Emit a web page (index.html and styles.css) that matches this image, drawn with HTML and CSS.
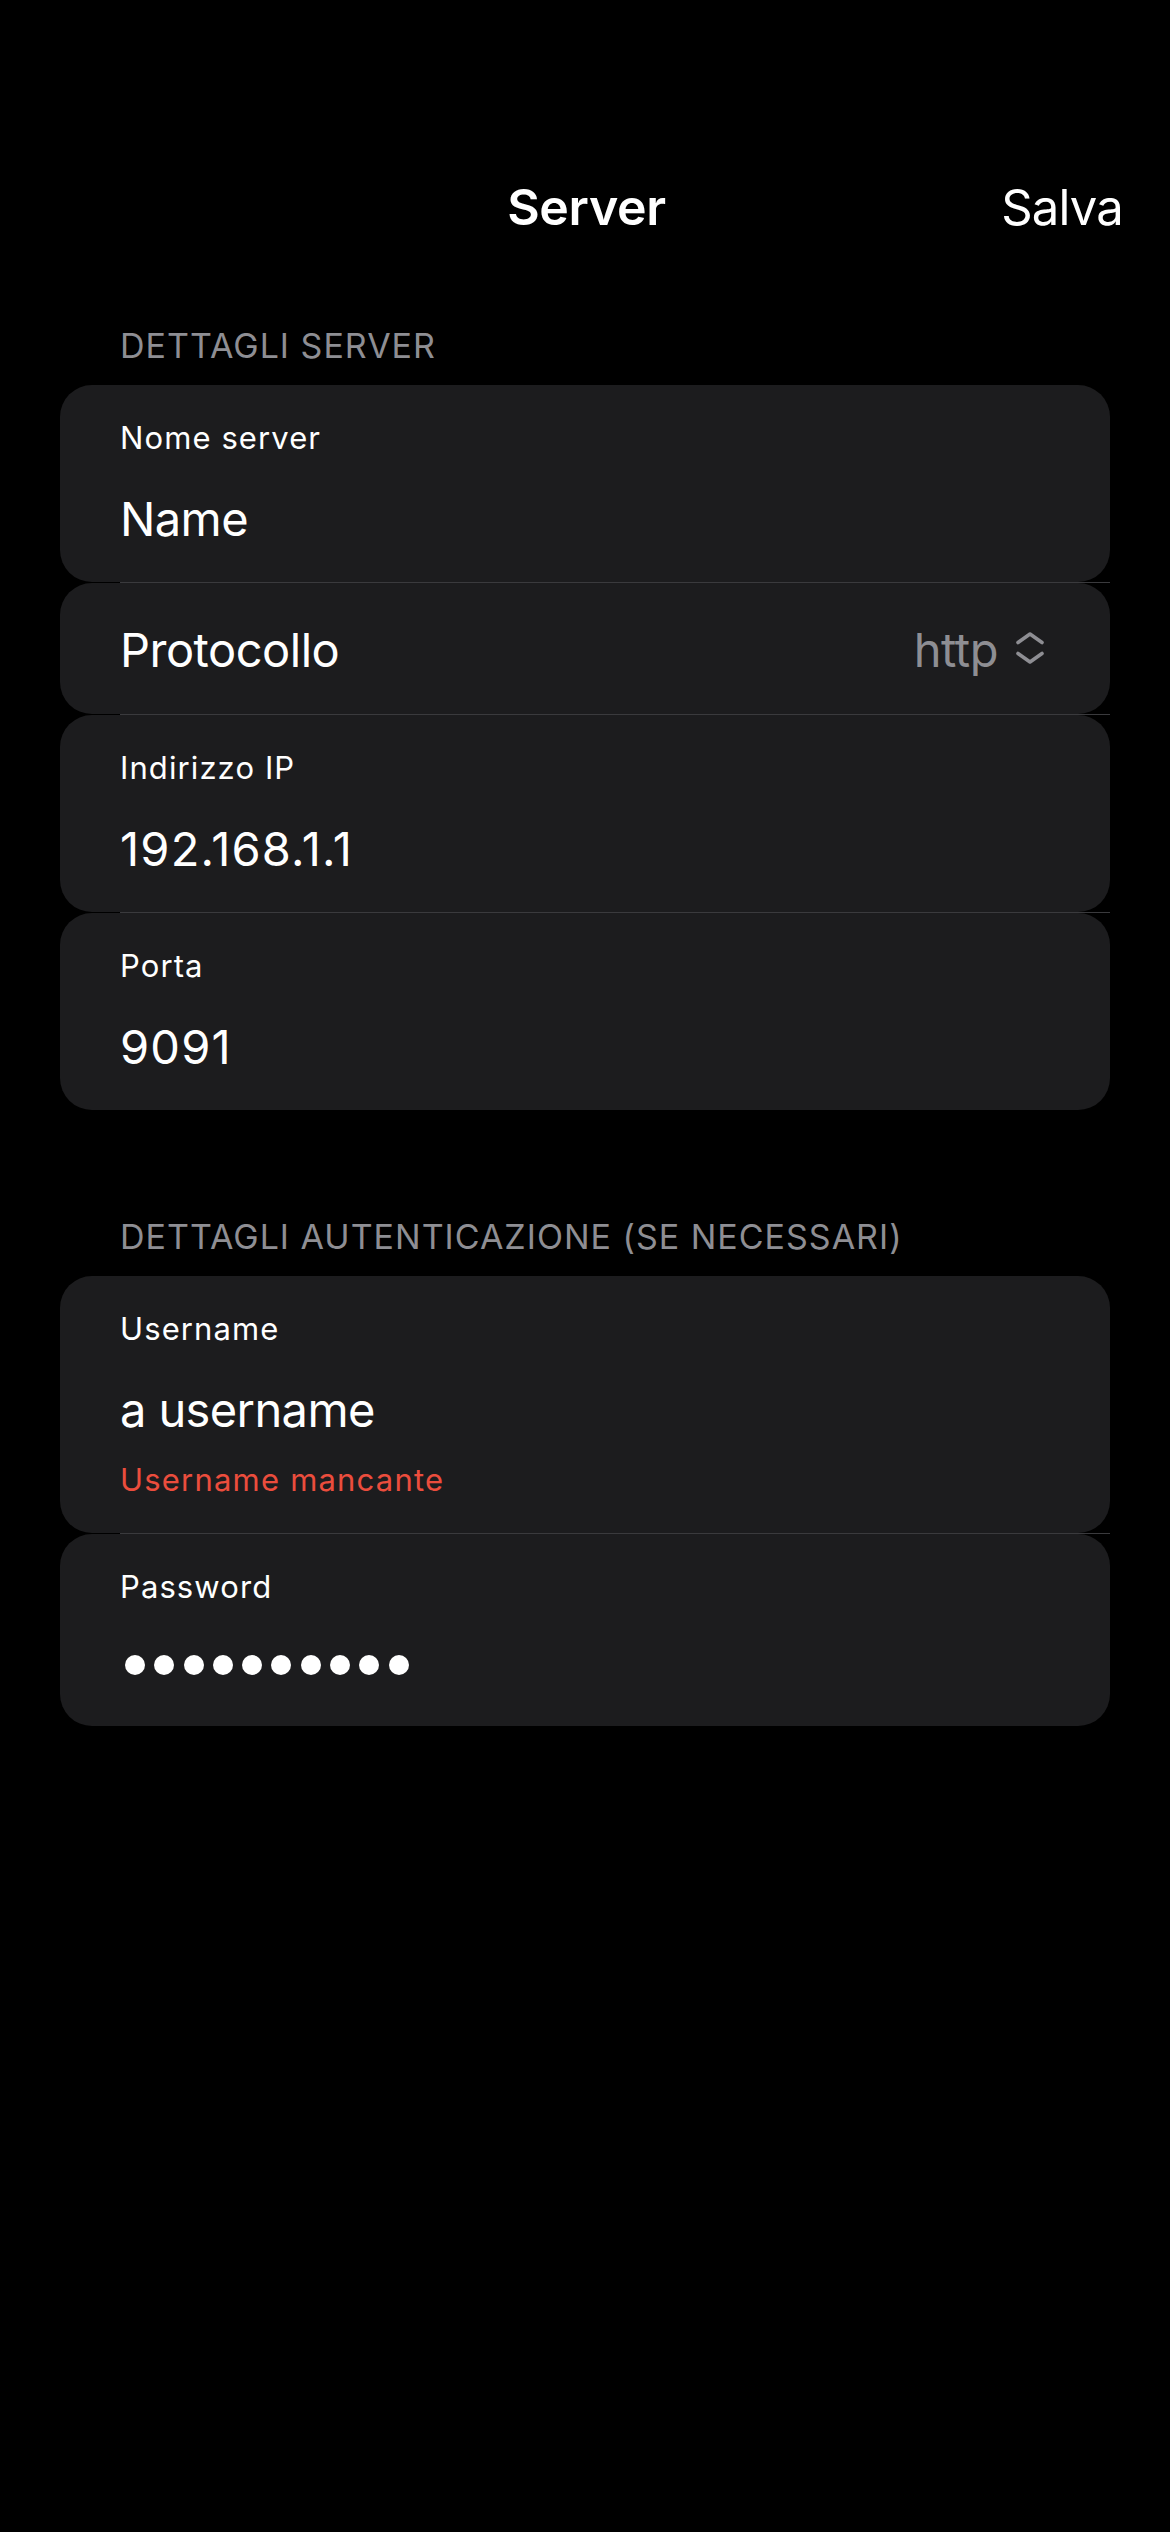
FILE: index.html
```html
<!DOCTYPE html>
<html lang="it">
<head>
<meta charset="utf-8">
<title>Server</title>
<link rel="stylesheet" href="styles.css">
</head>
<body>
<div class="screen">
  <header class="navbar">
    <span class="nav-spacer"></span>
    <h1 class="nav-title">Server</h1>
    <span class="nav-action">Salva</span>
  </header>

  <main class="form">
    <section class="section section-server">
      <h2 class="section-header">DETTAGLI SERVER</h2>
      <div class="group">
        <div class="row">
          <div class="field-label">Nome server</div>
          <div class="field-value">Name</div>
        </div>
        <div class="separator"></div>
        <div class="row row-picker">
          <span class="picker-label">Protocollo</span>
          <span class="picker-value">
            <span class="picker-text">http</span>
            <svg class="picker-icon" width="32" height="36" viewBox="0 0 32 36" aria-hidden="true">
              <path d="M4 12.5 L16 4 L28 12.5" fill="none" stroke="#8e8e93" stroke-width="3.6" stroke-linecap="round" stroke-linejoin="round"/>
              <path d="M4 23.5 L16 32 L28 23.5" fill="none" stroke="#8e8e93" stroke-width="3.6" stroke-linecap="round" stroke-linejoin="round"/>
            </svg>
          </span>
        </div>
        <div class="separator"></div>
        <div class="row">
          <div class="field-label">Indirizzo IP</div>
          <div class="field-value numeric">192.168.1.1</div>
        </div>
        <div class="separator"></div>
        <div class="row">
          <div class="field-label">Porta</div>
          <div class="field-value numeric">9091</div>
        </div>
      </div>
    </section>

    <section class="section section-auth">
      <h2 class="section-header">DETTAGLI AUTENTICAZIONE (SE NECESSARI)</h2>
      <div class="group">
        <div class="row row-error">
          <div class="field-label">Username</div>
          <div class="field-value">a username</div>
          <div class="field-error">Username mancante</div>
        </div>
        <div class="separator"></div>
        <div class="row row-password">
          <div class="field-label">Password</div>
          <div class="dots" aria-label="password">
            <span class="dot"></span><span class="dot"></span><span class="dot"></span><span class="dot"></span><span class="dot"></span>
            <span class="dot"></span><span class="dot"></span><span class="dot"></span><span class="dot"></span><span class="dot"></span>
          </div>
        </div>
      </div>
    </section>
  </main>
</div>
</body>
</html>
```

FILE: styles.css
```css
* {
  box-sizing: border-box;
  margin: 0;
  padding: 0;
}

html,
body {
  background: #000;
}

body {
  font-family: Inter, "Noto Sans", "Liberation Sans", sans-serif;
  color: #fff;
  min-height: 2532px;
}

.navbar {
  display: grid;
  grid-template-columns: 1fr auto 1fr;
  align-items: baseline;
  padding: 177px 47px 0 50px;
  height: 237px;
}

.nav-title {
  font-size: 50px;
  font-weight: 600;
  line-height: 60px;
  letter-spacing: -0.3px;
}

.nav-action {
  justify-self: end;
  font-size: 49px;
  font-weight: 400;
  line-height: 60px;
  letter-spacing: -0.8px;
}

.form {
  padding: 0 60px;
}

.section-server {
  margin-top: 89px;
}

.section-auth {
  margin-top: 107px;
}

.section-header {
  font-size: 34px;
  font-weight: 400;
  line-height: 40px;
  color: #8e8e93;
  padding-left: 60px;
  margin-bottom: 19px;
  letter-spacing: 1px;
}

.group {
  display: flex;
  flex-direction: column;
}

.row {
  background: #1c1c1e;
  border-radius: 32px;
  padding: 34px 60px 35px;
}

.separator {
  height: 1px;
  margin-left: 60px;
  background: #3a3a3d;
}

.field-label {
  font-size: 31px;
  line-height: 38px;
  letter-spacing: 1.1px;
}

.field-value {
  font-size: 47px;
  line-height: 56px;
  margin-top: 34px;
  letter-spacing: -0.6px;
}

.field-value.numeric {
  letter-spacing: 1.2px;
}

.row-picker {
  display: flex;
  justify-content: space-between;
  align-items: flex-start;
  padding: 39px 64px 36px 60px;
}

.picker-label,
.picker-text {
  font-size: 47px;
  line-height: 56px;
  letter-spacing: -0.5px;
}

.picker-value {
  display: flex;
  align-items: flex-start;
  gap: 16px;
  color: #8e8e93;
}

.picker-icon {
  margin-top: 8px;
  display: block;
}

.row-error {
  padding-bottom: 34px;
}

.field-error {
  color: #eb4d3d;
  font-size: 31px;
  line-height: 38px;
  margin-top: 23px;
  letter-spacing: 1.2px;
}

.row-password {
  padding-bottom: 36px;
}

.dots {
  display: flex;
  align-items: center;
  gap: 9.3px;
  height: 50px;
  margin-top: 34px;
  padding-left: 5px;
}

.dot {
  width: 20px;
  height: 20px;
  border-radius: 50%;
  background: #fff;
}
```
